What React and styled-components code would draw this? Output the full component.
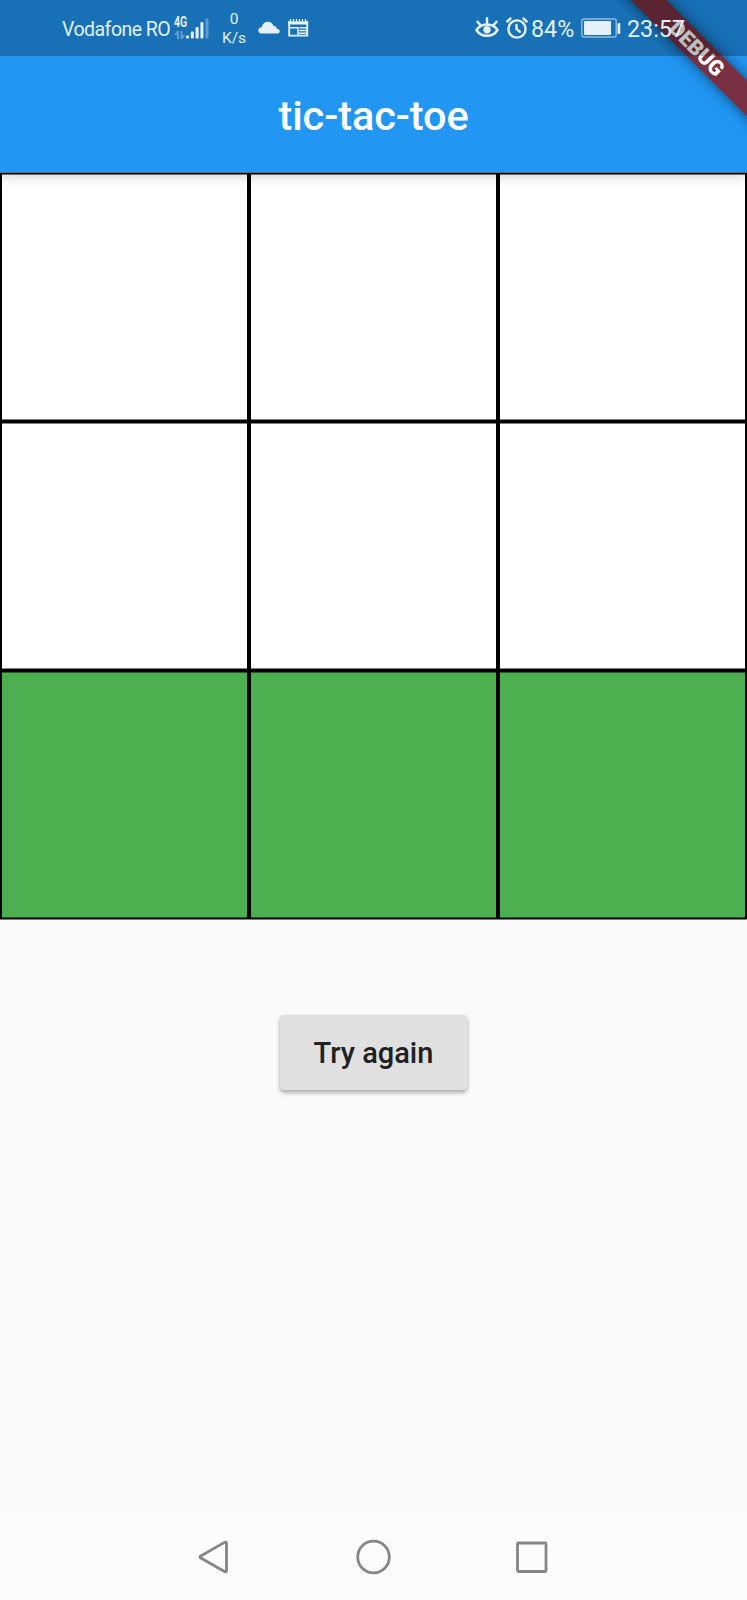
import React from "react";
import styled, { createGlobalStyle } from "styled-components";

const GlobalStyle = createGlobalStyle`
  *, *::before, *::after { box-sizing: border-box; }
  body { margin: 0; background: #fafafa; font-family: Roboto, "Liberation Sans", sans-serif; }
`;

const Screen = styled.div`
  position: relative;
  display: flex;
  flex-direction: column;
  width: 747px;
  height: 1600px;
  overflow: hidden;
  background: #fafafa;
`;

const Header = styled.header`
  position: relative;
  z-index: 1;
  display: flex;
  flex-direction: column;
  flex: none;
  height: 172px;
  background: #2196f3;
  box-shadow: 0 4px 12px rgba(0, 0, 0, 0.2);
`;

const StatusBar = styled.div`
  position: relative;
  z-index: 3;
  display: flex;
  justify-content: space-between;
  height: 56px;
  padding: 0 62px;
  background: rgba(0, 0, 0, 0.25);
  color: #e4f1fb;
`;

const StatusGroup = styled.div`
  display: flex;
  align-items: center;
  height: 56px;
`;

const StatusText = styled.span`
  flex: none;
  width: ${(p) => p.$width}px;
  margin-left: ${(p) => p.$gap || 0}px;
  padding-top: ${(p) => p.$drop || 0}px;
  font-size: ${(p) => p.$size}px;
  line-height: 28px;
  letter-spacing: ${(p) => p.$tracking || 0}px;
  white-space: nowrap;
`;

const StatusIcon = styled.svg`
  flex: none;
  display: block;
  margin-left: ${(p) => p.$gap || 0}px;
`;

const Network = styled.div`
  display: flex;
  align-items: flex-end;
  width: 36px;
  height: 22px;
  margin-left: 4px;
`;

const NetworkType = styled.div`
  display: flex;
  flex-direction: column;
  justify-content: space-between;
  flex: none;
  width: 12px;
  height: 22px;
`;

const NetworkLabel = styled.span`
  display: block;
  width: 18px;
  font-size: 14px;
  font-weight: 700;
  line-height: 11px;
  transform: scaleX(0.75);
  transform-origin: left;
`;

const Speed = styled.div`
  width: 28px;
  margin-left: 10px;
  padding-top: 2px;
  font-size: 15.5px;
  line-height: 19px;
  text-align: center;
  white-space: nowrap;
`;

const AppBar = styled.div`
  display: flex;
  align-items: center;
  justify-content: center;
  height: 116px;
`;

const Title = styled.h1`
  margin: 0;
  padding-top: 4px;
  color: #fff;
  font-size: 41.5px;
  font-weight: 500;
  line-height: 48px;
  letter-spacing: -0.1px;
`;

const Ribbon = styled.div`
  position: absolute;
  z-index: 2;
  left: 597px;
  top: 36px;
  width: 200px;
  height: 25px;
  background: #7a3043;
  box-shadow: 0 0 14px rgba(0, 0, 0, 0.55);
  color: #fff;
  font-size: 21.2px;
  font-weight: 900;
  line-height: 25px;
  text-align: center;
  transform: rotate(45deg);
`;

const Board = styled.main`
  display: grid;
  grid-template-columns: repeat(3, 245px);
  grid-auto-rows: 245px;
  gap: 4px;
  flex: none;
  padding: 2px;
  background: #000;
  transform: translateY(0.5px);
`;

const Cell = styled.div`
  background: ${(p) => (p.$winner ? "#4caf50" : "#fff")};
`;

const Actions = styled.section`
  display: flex;
  justify-content: center;
  flex: 1;
  padding-top: 96px;
`;

const RetryButton = styled.button`
  width: 187px;
  height: 75px;
  padding: 0;
  border: 0;
  border-radius: 4px;
  background: #e0e0e0;
  box-shadow: 0 3px 4px rgba(0, 0, 0, 0.26), 0 1px 4px rgba(0, 0, 0, 0.1);
  color: #212121;
  font-family: inherit;
  font-size: 29px;
  font-weight: 500;
  line-height: 34px;
`;

const NavBar = styled.nav`
  display: flex;
  align-items: flex-start;
  flex: none;
  height: 84px;
  padding: 22px 0 0 193px;
  gap: 119px;
  background: #fcfcfc;
`;

const NavIcon = styled.svg`
  display: block;
  width: 40px;
  height: 40px;
  fill: none;
  stroke: #868686;
  stroke-width: 2.8;
  stroke-linejoin: round;
`;

const cells = [false, false, false, false, false, false, true, true, true];

function SignalIcon() {
  return (
    <Network>
      <NetworkType>
        <NetworkLabel>4G</NetworkLabel>
        <svg width="11" height="8" viewBox="0 0 11 8" fill="currentColor" opacity="0.35">
          <path d="M3 0h2v8H3zM3 0v4H0zM6.500 0h2v8h-2zM8.500 8V4h3z" />
        </svg>
      </NetworkType>
      <svg width="23" height="22" viewBox="0 0 23 22" fill="currentColor">
        <rect x="0" y="18.500" width="3" height="3" rx="1" />
        <rect x="4.800" y="14.500" width="3" height="7" rx="1" />
        <rect x="9.600" y="10" width="3" height="11.500" rx="1" />
        <rect x="14.400" y="5" width="3" height="16.500" rx="1" />
        <rect x="19.500" y="1.500" width="3" height="20" rx="1" opacity="0.35" />
      </svg>
    </Network>
  );
}

function CloudIcon() {
  return (
    <StatusIcon $gap={10} width="22" height="14" viewBox="0 0 22 14" fill="currentColor">
      <path d="M4 12.500C1.700 12.500.3 11.300.3 9.400c0-1.800 1.300-3 3.300-3.200C4.500 2.800 6.800.8 9.800.8c2.900 0 4.800 1.500 5.600 4 2.200.1 3.200 1.300 3.400 3 1.900.2 2.900 1 2.900 2.400s-1 2.300-2.600 2.300z" />
    </StatusIcon>
  );
}

function NewsIcon() {
  return (
    <StatusIcon $gap={8} width="21" height="20" viewBox="0 0 21 20" fill="none" stroke="currentColor">
      <path d="M1.200 3v14.600h18V3" strokeWidth="1.900" />
      <path d="M.3 5h19.800" strokeWidth="3" />
      <path d="M2.500 1v4M5.500 1v4M8.500 1v4M11.500 1v4M14.500 1v4M17.500 1v4" strokeWidth="1.300" />
      <path d="M1.500 9.800h8.500v8" strokeWidth="1.500" />
      <path d="M11.500 9.800H19M11.500 12.500H19M10 15.200h9" strokeWidth="1.500" />
    </StatusIcon>
  );
}

function EyeIcon() {
  return (
    <StatusIcon width="24" height="22" viewBox="0 0 24 22" fill="none" stroke="currentColor" strokeWidth="2.500">
      <path d="M1.500 13C4 9 7.500 7.500 12 7.500S20 9 22.500 13c-2.500 4-6 5.800-10.500 5.800S4 17 1.500 13Z" />
      <path d="M12 1.300v6M2.500 4.800l3 3.500M21.500 4.800l-3 3.500" strokeLinecap="round" />
      <circle cx="12" cy="12.800" r="3.700" fill="currentColor" stroke="none" />
    </StatusIcon>
  );
}

function AlarmIcon() {
  return (
    <StatusIcon $gap={7} width="22" height="22" viewBox="0 0 22 22" fill="none" stroke="currentColor" strokeWidth="2.400" strokeLinecap="round">
      <circle cx="11" cy="12" r="8.600" />
      <path d="M10.500 8v4l3.300 2.700M1.300 4.500 4.500 1.500M20.700 4.500l-3.200-3" />
    </StatusIcon>
  );
}

function BatteryIcon() {
  return (
    <StatusIcon $gap={7} width="41" height="20" viewBox="0 0 41 20">
      <rect x=".8" y="1" width="34.400" height="18" rx="2" fill="none" stroke="#8dbce3" strokeWidth="1.400" />
      <rect x="3" y="3" width="27" height="14" rx="1" fill="currentColor" />
      <rect x="36.500" y="5" width="2.800" height="11" rx="1" fill="currentColor" />
    </StatusIcon>
  );
}

export default function App() {
  return (
    <Screen>
      <GlobalStyle />
      <Header>
        <StatusBar>
          <StatusGroup>
            <StatusText $width={108} $size={19.5} $drop={3} $tracking={-0.52}>Vodafone RO</StatusText>
            <SignalIcon />
            <Speed>0<br />K/s</Speed>
            <CloudIcon />
            <NewsIcon />
          </StatusGroup>
          <StatusGroup>
            <EyeIcon />
            <AlarmIcon />
            <StatusText $width={43} $size={23.3} $gap={3} $drop={1}>84%</StatusText>
            <BatteryIcon />
            <StatusText $width={58} $size={23.3} $gap={5} $drop={1}>23:57</StatusText>
          </StatusGroup>
        </StatusBar>
        <AppBar>
          <Title>tic-tac-toe</Title>
        </AppBar>
        <Ribbon>DEBUG</Ribbon>
      </Header>
      <Board>
        {cells.map((winner, index) => (
          <Cell key={index} $winner={winner} />
        ))}
      </Board>
      <Actions>
        <RetryButton type="button">Try again</RetryButton>
      </Actions>
      <NavBar>
        <NavIcon viewBox="0 0 40 40" aria-label="Back">
          <path d="M7.800 18 31.500 4.400Q33.500 3.300 33.500 5.500V32.500Q33.500 34.700 31.500 33.600L7.800 20Q6.200 19 7.800 18Z" />
        </NavIcon>
        <NavIcon viewBox="0 0 40 40" aria-label="Home">
          <circle cx="21.500" cy="19" r="15.800" />
        </NavIcon>
        <NavIcon viewBox="0 0 40 40" aria-label="Recents">
          <rect x="6.500" y="5" width="28.500" height="28.500" rx="1" />
        </NavIcon>
      </NavBar>
    </Screen>
  );
}
